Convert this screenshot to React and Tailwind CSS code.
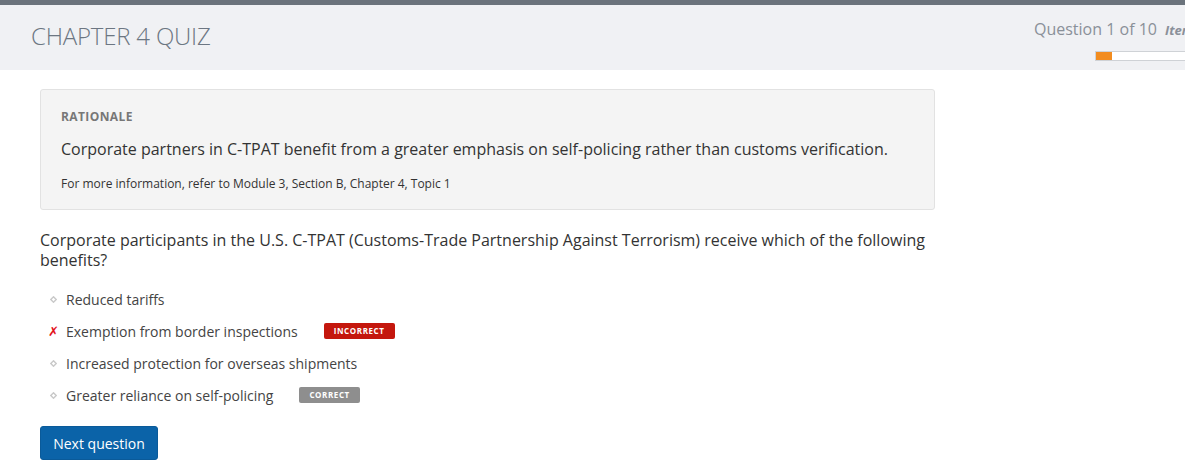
import React from 'react';

const options = [
  { text: 'Reduced tariffs' },
  { text: 'Exemption from border inspections', picked: true, badge: 'INCORRECT' },
  { text: 'Increased protection for overseas shipments' },
  { text: 'Greater reliance on self-policing', badge: 'CORRECT' },
];

const Bullet = () => (
  <svg width="7" height="7" viewBox="0 0 7 7" className="text-[#c9c9c9]">
    <path d="M3.5 0.8 L6.2 3.5 L3.5 6.2 L0.8 3.5 Z" fill="none" stroke="currentColor" strokeWidth="1.4" />
  </svg>
);

const App = () => {
  return (
    <div className="w-[1185px] h-[475px] overflow-hidden bg-white font-['Open_Sans',sans-serif] text-[#333]">
      <div className="h-[5px] bg-[#6b737c]" />
      <div className="h-[65px] bg-[#f0f1f4] flex">
        <h1 className="pl-[31px] pt-[15px] text-[24px] font-light text-[#6c7682] leading-[32px] tracking-[-0.2px]">
          CHAPTER 4 QUIZ
        </h1>
        <div className="ml-auto w-[151px] shrink-0 pt-[13px] overflow-hidden">
          <div className="flex items-baseline gap-[8px] whitespace-nowrap">
            <span className="text-[16px] text-[#8a9099] leading-[22px]">Question 1 of 10</span>
            <span className="text-[13px] italic font-bold text-[#8a9099]">Item</span>
          </div>
          <div className="mt-[10px] ml-[61px] w-[130px] h-[10px] bg-white border border-[#cfd2d6] flex">
            <div className="w-[16px] h-full bg-[#f28c1f]" />
          </div>
        </div>
      </div>

      <div className="pl-[40px] w-[935px] pt-[19px]">
        <div className="bg-[#f4f4f4] border border-[#e2e2e2] rounded-[3px] pl-[20px] pt-[18px] pb-[17px]">
          <div className="text-[12px] font-bold text-[#777] leading-[18px] tracking-[0.4px]">RATIONALE</div>
          <p className="mt-[12px] text-[16px] leading-[22px] text-[#333]">
            Corporate partners in C-TPAT benefit from a greater emphasis on self-policing rather than customs verification.
          </p>
          <p className="mt-[16px] text-[12px] leading-[16px] text-[#333]">
            For more information, refer to Module 3, Section B, Chapter 4, Topic 1
          </p>
        </div>

        <p className="mt-[20px] text-[16px] leading-[20px] text-[#333] pr-[4px]">
          Corporate participants in the U.S. C-TPAT (Customs-Trade Partnership Against Terrorism) receive which of the following benefits?
        </p>

        <ul className="mt-[19px] flex flex-col gap-[12px]">
          {options.map((o) => (
            <li key={o.text} className="flex items-center h-[20px]">
              <span className="w-[26px] flex justify-center pl-[1px]">
                {o.picked ? (
                  <span className="text-[13px] font-bold text-[#e3131b] leading-none font-['DejaVu_Sans',sans-serif]">✗</span>
                ) : (
                  <Bullet />
                )}
              </span>
              <span className="text-[14px] text-[#444]">{o.text}</span>
              {o.badge && (
                <span
                  className={`ml-[26px] h-[16px] px-[10px] rounded-[2px] text-white text-[8px] font-bold tracking-[0.6px] flex items-center ${
                    o.badge === 'INCORRECT' ? 'bg-[#c4170d]' : 'bg-[#8e8e8e]'
                  }`}
                >
                  {o.badge}
                </span>
              )}
            </li>
          ))}
        </ul>

        <button className="mt-[21px] w-[118px] h-[34px] bg-[#0b63a8] rounded-[3px] text-white text-[14px] font-normal border border-[#0a5a99]">
          Next question
        </button>
      </div>
    </div>
  );
};

export default App;
